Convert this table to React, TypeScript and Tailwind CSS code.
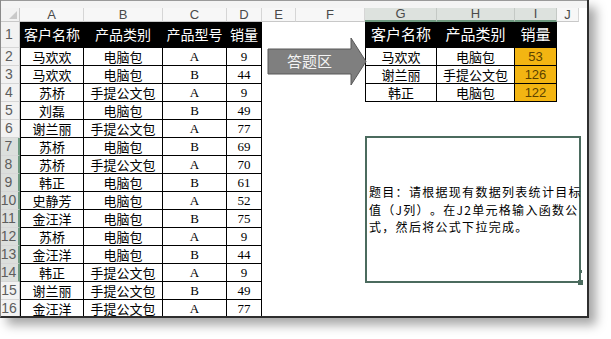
import React from 'react';

const cjk = "font-['Noto_Sans_CJK_SC','Noto_Sans',sans-serif]";
const arial = "font-['Liberation_Sans',Arial,sans-serif]";

const cols = ['A', 'B', 'C', 'D', 'E', 'F', 'G', 'H', 'I', 'J'];

const leftRows: [string, string, string, string][] = [
  ['马欢欢', '电脑包', 'A', '9'],
  ['马欢欢', '电脑包', 'B', '44'],
  ['苏桥', '手提公文包', 'A', '9'],
  ['刘磊', '电脑包', 'B', '49'],
  ['谢兰丽', '手提公文包', 'A', '77'],
  ['苏桥', '电脑包', 'B', '69'],
  ['苏桥', '手提公文包', 'A', '70'],
  ['韩正', '电脑包', 'B', '61'],
  ['史静芳', '电脑包', 'A', '52'],
  ['金汪洋', '电脑包', 'B', '75'],
  ['苏桥', '电脑包', 'A', '9'],
  ['金汪洋', '电脑包', 'B', '44'],
  ['韩正', '手提公文包', 'A', '9'],
  ['谢兰丽', '手提公文包', 'B', '49'],
  ['金汪洋', '手提公文包', 'A', '77'],
];

const rightRows: [string, string, string][] = [
  ['马欢欢', '电脑包', '53'],
  ['谢兰丽', '手提公文包', '126'],
  ['韩正', '电脑包', '122'],
];

function RowHeader({ n }: { n: number }) {
  const selected = n >= 7 && n <= 14;
  return (
    <div
      className={
        selected
          ? `flex items-center justify-center pr-[2px] bg-[#dcdfdc] border-r-2 border-[#6f9a80] border-b border-b-[#d6d6d6] text-[14px] text-[#5d5d5d] ${arial}`
          : `flex items-center justify-center pr-[2px] bg-[#f2f2f2] border-r border-[#c8c8c8] border-b border-b-[#d6d6d6] text-[14px] text-[#5d5d5d] ${arial}`
      }
    >
      {n}
    </div>
  );
}

function Cell({
  children,
  first,
  head,
  hl,
  serif,
}: {
  children?: React.ReactNode;
  first?: boolean;
  head?: boolean;
  hl?: boolean;
  serif?: boolean;
}) {
  let cls = 'flex items-center justify-center border-r border-b border-black whitespace-nowrap ';
  if (first) cls += 'border-l ';
  if (head) cls += `bg-black text-white text-[14px] ${cjk} `;
  else if (hl) cls += `bg-[#f3b512] text-[#5b4200] text-[13px] ${arial} `;
  else if (serif) cls += "text-[13px] text-black font-['Liberation_Serif','DejaVu_Serif',serif] ";
  else cls += `text-[13px] text-black ${cjk} `;
  return <div className={cls}>{children}</div>;
}

function Blank() {
  return <div className="bg-white" />;
}

export default function App() {
  return (
    <div className="w-[611px] h-[339px] bg-white relative overflow-hidden">
      <div className="relative w-[589px] h-[318px] bg-white border-l border-[#8a8a8a] border-r-2 border-b-2 border-r-[#2e2e2e] border-b-[#2e2e2e] shadow-[7px_7px_10px_rgba(0,0,0,0.35)] overflow-hidden">
        <div className="h-[8px] bg-[#f4f4f4] border-t border-[#9a9a9a]" />
        <div className="grid grid-cols-[19px_64px_79px_64px_35px_34px_69px_72px_78px_42px_22px_1fr] grid-rows-[14px_26px_repeat(15,18px)]">
          {/* column headers */}
          <div className="relative bg-[#f2f2f2] border-r border-b border-[#c8c8c8]">
            <div className="absolute right-[2px] bottom-[2px] w-0 h-0 border-l-[8px] border-l-transparent border-b-[8px] border-b-[#c9c9c9]" />
          </div>
          {cols.map((c) => {
            const sel = c === 'G' || c === 'H' || c === 'I';
            return (
              <div
                key={c}
                className={
                  sel
                    ? `flex items-center justify-center bg-[#dde2de] border-r border-[#c4c9c5] border-b-2 border-b-[#6f9a80] text-[13px] text-[#4a4a4a] ${arial}`
                    : `flex items-center justify-center bg-[#f7f7f7] border-r border-[#d6d6d6] border-b border-b-[#c8c8c8] text-[13px] text-[#4a4a4a] ${arial}`
                }
              >
                {c}
              </div>
            );
          })}
          <div className="bg-white" />

          {/* row 1 */}
          <RowHeader n={1} />
          <Cell head first>客户名称</Cell>
          <Cell head>产品类别</Cell>
          <Cell head>产品型号</Cell>
          <Cell head>销量</Cell>
          <Blank />
          <Blank />
          <Cell head first>
            <span className="text-[15px]">客户名称</span>
          </Cell>
          <Cell head>
            <span className="text-[15px]">产品类别</span>
          </Cell>
          <Cell head>
            <span className="text-[15px]">销量</span>
          </Cell>
          <Blank />
          <Blank />

          {leftRows.map((r, i) => {
            const n = i + 2;
            const right = rightRows[i];
            return (
              <React.Fragment key={n}>
                <RowHeader n={n} />
                <Cell first>{r[0]}</Cell>
                <Cell>{r[1]}</Cell>
                <Cell serif>{r[2]}</Cell>
                <Cell serif>{r[3]}</Cell>
                <Blank />
                <Blank />
                {right ? (
                  <>
                    <Cell first>{right[0]}</Cell>
                    <Cell>{right[1]}</Cell>
                    <Cell hl>{right[2]}</Cell>
                  </>
                ) : (
                  <>
                    <Blank />
                    <Blank />
                    <Blank />
                  </>
                )}
                <Blank />
                <Blank />
              </React.Fragment>
            );
          })}
        </div>

        {/* arrow shape */}
        <div className="absolute left-[266px] top-[37px] w-[100px] h-[49px]">
          <svg width="100" height="49" viewBox="0 0 100 49" className="absolute inset-0">
            <polygon
              points="1,12 84,12 84,1 99,24.5 84,48 84,37 1,37"
              fill="#7f7f7f"
              stroke="#595959"
              strokeWidth="1"
            />
          </svg>
          <div className={`absolute left-[1px] top-[12px] w-[83px] h-[25px] flex items-center justify-center text-[15px] text-[#f4f4f4] ${cjk}`}>
            答题区
          </div>
        </div>

        {/* question text box */}
        <div className="absolute left-[364px] top-[136px] w-[216px] h-[147px] border-2 border-[#4b6b5e] bg-white flex items-center">
          <div className={`pl-[2px] text-[12px] tracking-[1.3px] leading-[17.5px] text-black whitespace-nowrap [text-spacing-trim:space-all] ${cjk}`}>
            题目：请根据现有数据列表统计目标
            <br />
            值（J列）。在J2单元格输入函数公
            <br />
            式，然后将公式下拉完成。
          </div>
          <div className="absolute right-[-4px] bottom-[-4px] w-[5px] h-[5px] bg-[#4b6b5e]" />
          <div className="absolute right-[-3px] bottom-[8px] w-[3px] h-[3px] bg-[#4b6b5e]" />
        </div>
      </div>
    </div>
  );
}
